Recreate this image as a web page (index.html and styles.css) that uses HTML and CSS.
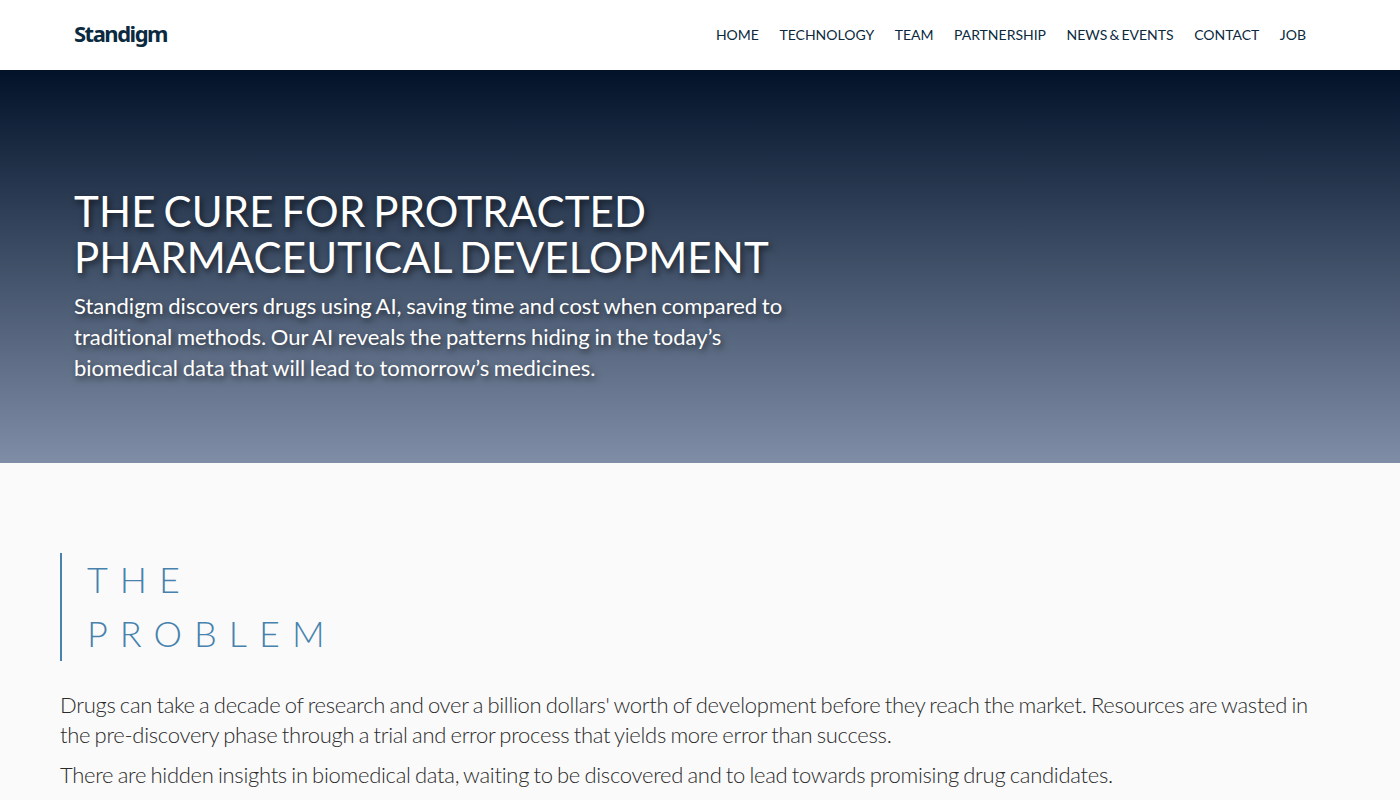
FILE: index.html
```html
<!DOCTYPE html>
<html lang="en">
<head>
<meta charset="utf-8">
<title>Standigm</title>
<link rel="stylesheet" href="styles.css">
</head>
<body>
<header class="nav">
  <a class="logo" href="#">Standigm</a>
  <nav class="menu">
    <a href="#">HOME</a>
    <a href="#">TECHNOLOGY</a>
    <a href="#">TEAM</a>
    <a href="#">PARTNERSHIP</a>
    <a href="#">NEWS &amp; EVENTS</a>
    <a href="#">CONTACT</a>
    <a href="#">JOB</a>
  </nav>
</header>
<section class="hero">
  <h1>THE CURE FOR PROTRACTED<br>PHARMACEUTICAL DEVELOPMENT</h1>
  <p>Standigm discovers drugs using AI, saving time and cost when compared to<br>traditional methods. Our AI reveals the patterns hiding in the today’s<br>biomedical data that will lead to tomorrow’s medicines.</p>
</section>
<main class="content">
  <h2 class="title"><span class="title-text">THE<br>PROBLEM</span></h2>
  <p class="body-text">Drugs can take a decade of research and over a billion dollars' worth of development before they reach the market. Resources are wasted in the pre-discovery phase through a trial and error process that yields more error than success.</p>
  <p class="body-text">There are hidden insights in biomedical data, waiting to be discovered and to lead towards promising drug candidates.</p>
</main>
</body>
</html>
```
FILE: styles.css
```css
* { box-sizing: border-box; }
html, body { margin: 0; padding: 0; }
body { background: #fafafa; font-family: Lato, sans-serif; color: #333; height: 800px; overflow: hidden; font-variant-ligatures: none; }
a { text-decoration: none; color: inherit; }
.nav { height: 70px; background: #fff; display: flex; align-items: center; justify-content: space-between; padding: 0 94px 2px 74px; }
.logo { font-family: "Noto Sans", sans-serif; font-weight: 700; font-size: 22px; line-height: 30px; letter-spacing: -1.5px; color: #0b2a40; margin-bottom: 2px; }
.menu { display: flex; gap: 20.5px; font-size: 14px; color: #0b2a40; word-spacing: -1.5px; }
.hero { height: 393px; padding: 118px 74px 0; background: linear-gradient(180deg, #011229 0%, #7f8ea6 100%); color: #fff; text-shadow: 2px 3px 6px rgba(0,0,0,.6); }
.hero h1 { margin: 0 0 10px; font-size: 42px; line-height: 46px; font-weight: 400; letter-spacing: 0.15px; word-spacing: -3px; }
.hero p { margin: 0; font-size: 22px; line-height: 31px; word-spacing: -1px; }
.content { padding: 90px 60px 0; }
.title { display: flow-root; margin: 0 0 29px; padding-left: 25px; border-left: 2px solid #4682ad; font-size: 36px; line-height: 54px; font-weight: 300; letter-spacing: 12px; color: #4682ad; }
.title-text { display: block; margin: -1px 0 1px; }
.body-text { margin: 0 0 10px; font-size: 22px; line-height: 30px; font-weight: 300; letter-spacing: -0.29px; word-spacing: -1.3px; color: #2b2b2b; }
```
